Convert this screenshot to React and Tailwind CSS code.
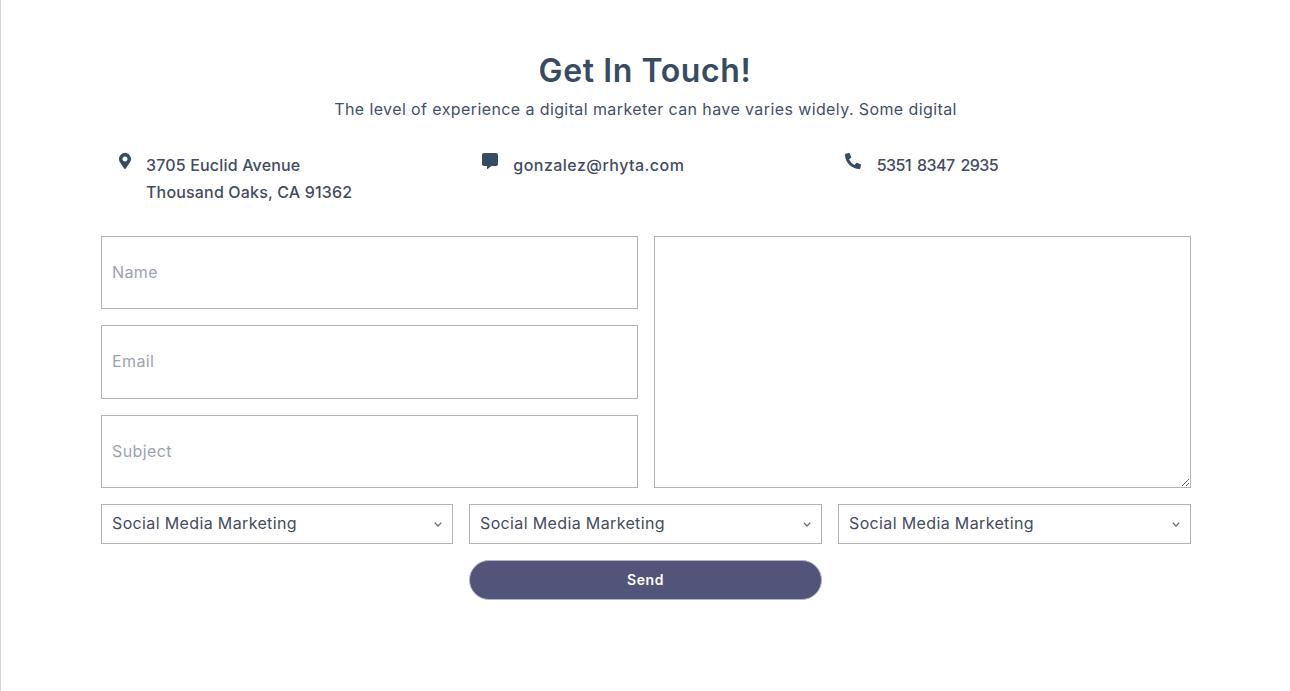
import { FaMapMarkerAlt, FaCommentAlt, FaPhoneAlt } from 'react-icons/fa';

const font = { fontFamily: 'Inter, sans-serif' };

function Contact({ icon, lines, pad, gap, track }) {
  return (
    <div className={`flex ${pad}`}>
      <div className={`pt-[1px] text-[#374b63] ${gap}`}>{icon}</div>
      <div className={`text-[16px] leading-[27px] font-medium text-[#434c5e] ${track}`}>
        {lines.map((line) => (
          <p key={line}>{line}</p>
        ))}
      </div>
    </div>
  );
}

function Field({ placeholder, bottom }) {
  return (
    <input
      placeholder={placeholder}
      className={`w-full h-full min-w-0 border border-[#b3b3b3] px-[10px] text-[16px] tracking-[0.4px] text-[#434c5e] placeholder:text-[#9ca3af] outline-none ${bottom}`}
    />
  );
}

function Pick() {
  return (
    <div className="relative">
      <select className="block h-10 w-full appearance-none border border-[#b3b3b3] bg-white pl-[10px] pr-6 pb-[2px] text-[16px] tracking-[0.36px] text-[#434c5e] outline-none">
        <option>Social Media Marketing</option>
        <option>Content Marketing</option>
        <option>Email Marketing</option>
      </select>
      <svg
        width="8"
        height="5"
        viewBox="0 0 8 5"
        fill="none"
        className="absolute right-[11px] top-[18px] pointer-events-none"
      >
        <path d="M0.8 0.8 L4 4 L7.2 0.8" stroke="#6b7280" strokeWidth="1.3" />
      </svg>
    </div>
  );
}

export default function App() {
  return (
    <div style={font} className="min-h-[691px] bg-white border-l border-[#d4d4d4] pt-[49px]">
      <div className="ml-[100px] w-[1090px]">
        <h1 className="pr-[2px] text-center text-[32px] leading-[44px] font-semibold tracking-[0.6px] text-[#374b63]">
          Get In Touch!
        </h1>
        <p className="mt-[4px] pr-[1px] text-center text-[16px] leading-[24px] tracking-[0.4px] text-[#434f68]">
          The level of experience a digital marketer can have varies widely. Some digital
        </p>

        <div className="mt-[31px] grid grid-cols-3">
          <Contact
            pad="pl-[18px]"
            gap="mr-[15px]"
            track="tracking-[0.17px]"
            icon={<FaMapMarkerAlt className="w-[12px] h-[16px]" />}
            lines={['3705 Euclid Avenue', 'Thousand Oaks, CA 91362']}
          />
          <Contact
            pad="pl-[18px]"
            gap="mr-[15px]"
            track="tracking-[0.45px]"
            icon={<FaCommentAlt className="w-[16px] h-[16px]" />}
            lines={['gonzalez@rhyta.com']}
          />
          <Contact
            pad="pl-[17px]"
            gap="mr-[16px]"
            track="tracking-[-0.5px] [word-spacing:2px]"
            icon={<FaPhoneAlt className="w-[16px] h-[16px]" />}
            lines={['5351 8347 2935']}
          />
        </div>

        <form className="mt-[30px] flex flex-col gap-4">
          <div className="grid grid-cols-2 gap-4 h-[252px]">
            <div className="grid grid-rows-3 gap-4 min-h-0">
              <Field placeholder="Name" bottom="pb-[2px]" />
              <Field placeholder="Email" bottom="pb-[2px]" />
              <Field placeholder="Subject" bottom="pb-0" />
            </div>
            <textarea className="w-full h-full border border-[#b3b3b3] px-[10px] py-2 outline-none" />
          </div>

          <div className="grid grid-cols-[352px_353px_353px] gap-4">
            <Pick />
            <Pick />
            <Pick />
          </div>

          <div className="grid grid-cols-[352px_353px_353px] gap-4">
            <button
              type="button"
              className="col-start-2 h-10 rounded-full border border-[#b3b3c4] bg-[#525579] pb-[1px] text-[14px] font-semibold tracking-[0.6px] text-white"
            >
              Send
            </button>
          </div>
        </form>
      </div>
    </div>
  );
}
